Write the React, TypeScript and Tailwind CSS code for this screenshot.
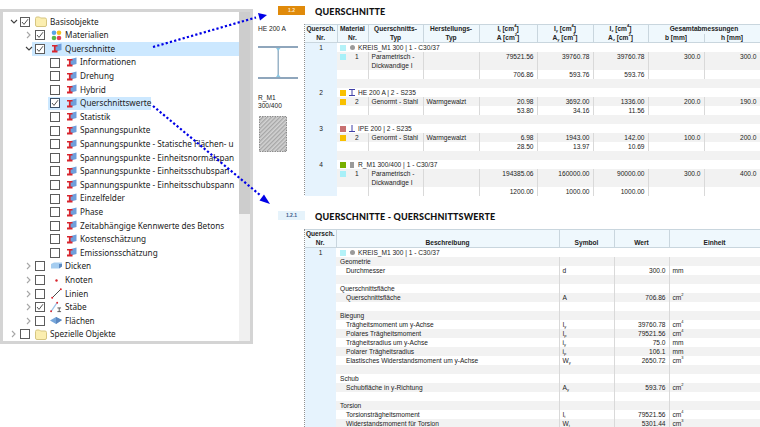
import type { ReactNode } from "react"

type TreeItem = { label: string; level: number; open?: boolean; closed?: boolean; checked?: boolean; icon: string; selected?: "full" | "text" }

const section = { icon: "section" }
const tree: TreeItem[] = [
  { label: "Basisobjekte", level: 0, open: true, checked: true, icon: "folder" },
  { label: "Materialien", level: 1, closed: true, checked: true, icon: "material" },
  { label: "Querschnitte", level: 1, open: true, checked: true, selected: "full", ...section },
  { label: "Informationen", level: 2, ...section },
  { label: "Drehung", level: 2, ...section },
  { label: "Hybrid", level: 2, ...section },
  { label: "Querschnittswerte", level: 2, checked: true, selected: "text", ...section },
  { label: "Statistik", level: 2, ...section },
  { label: "Spannungspunkte", level: 2, ...section },
  { label: "Spannungspunkte - Statische Flächen- u", level: 2, ...section },
  { label: "Spannungspunkte - Einheitsnormalspan", level: 2, ...section },
  { label: "Spannungspunkte - Einheitsschubspan", level: 2, ...section },
  { label: "Spannungspunkte - Einheitsschubspann", level: 2, ...section },
  { label: "Einzelfelder", level: 2, ...section },
  { label: "Phase", level: 2, ...section },
  { label: "Zeitabhängige Kennwerte des Betons", level: 2, ...section },
  { label: "Kostenschätzung", level: 2, ...section },
  { label: "Emissionsschätzung", level: 2, ...section },
  { label: "Dicken", level: 1, closed: true, icon: "thickness" },
  { label: "Knoten", level: 1, closed: true, icon: "node" },
  { label: "Linien", level: 1, closed: true, icon: "line" },
  { label: "Stäbe", level: 1, closed: true, checked: true, icon: "member" },
  { label: "Flächen", level: 1, closed: true, icon: "surface" },
  { label: "Spezielle Objekte", level: 0, closed: true, icon: "folder" },
]

function TreeIcon({ name }: { name: string }) {
  if (name === "folder") {
    return (
      <svg width="12" height="11" viewBox="0 0 12 11">
        <path d="M.5 2.5 Q.5 1 2 1 H4.5 L5.5 2 H10 Q11.5 2 11.5 3.5 V9 Q11.5 10.5 10 10.5 H2 Q.5 10.5 .5 9 Z" fill="#fbeeb0" stroke="#d6c581" />
      </svg>
    )
  }
  if (name === "material") {
    return (
      <svg width="11" height="11" viewBox="0 0 11 11">
        <circle cx="3" cy="2.8" r="2.3" fill="#5aa5e6" />
        <circle cx="8" cy="2.8" r="2.3" fill="#f5c020" />
        <circle cx="3" cy="8" r="2.3" fill="#58b848" />
        <circle cx="8" cy="8" r="2.3" fill="#e0405a" />
      </svg>
    )
  }
  if (name === "section") {
    return (
      <svg width="11" height="11" viewBox="0 0 11 11">
        <path d="M3 2.5 L10.5 .5 V7 L3 9 Z" fill="#6f9fdc" />
        <path d="M1 2 H6.5 V3.4 H4.6 V7.6 H6.5 V9.4 H1 V7.6 H2.9 V3.4 H1 Z" fill="#d8242c" />
      </svg>
    )
  }
  if (name === "thickness") {
    return (
      <svg width="11" height="11" viewBox="0 0 11 11">
        <path d="M0 3 L3 1.5 H11 V5.5 L8 7.5 H0 Z" fill="#a5cdf0" />
        <path d="M8 3 H11 V5.5 L8 7.5 Z" fill="#5c88c0" />
      </svg>
    )
  }
  if (name === "node") {
    return (
      <svg width="11" height="11" viewBox="0 0 11 11">
        <circle cx="5.5" cy="5.5" r="1.2" fill="#d8242c" />
      </svg>
    )
  }
  if (name === "line") {
    return (
      <svg width="11" height="11" viewBox="0 0 11 11">
        <path d="M1 10 L10 1" stroke="#333" strokeWidth="0.9" />
        <circle cx="1.2" cy="9.8" r="1" fill="#d8242c" />
        <circle cx="9.8" cy="1.2" r="1" fill="#d8242c" />
      </svg>
    )
  }
  if (name === "member") {
    return (
      <svg width="13" height="12" viewBox="0 0 13 12">
        <path d="M1 11 L7.5 1.5" stroke="#9cc4e8" strokeWidth="1.3" />
        <circle cx="1.2" cy="10.6" r="1" fill="#d8242c" />
        <circle cx="7.8" cy="1.4" r="1" fill="#d8242c" />
        <path d="M8 7 H12 M10 7 V11 M8 11 H12" stroke="#444" strokeWidth="0.9" fill="none" />
      </svg>
    )
  }
  return (
    <svg width="12" height="11" viewBox="0 0 12 11">
      <path d="M0 5.5 L6 2 L12 5 L6 9 Z" fill="#76a6da" />
      <path d="M6 2 L12 5 L6 9 Z" fill="#5c88c0" />
    </svg>
  )
}

function TreeRow({ item }: { item: TreeItem }) {
  const indent = item.level === 0 ? "pl-[5px]" : item.level === 1 ? "pl-[20px]" : "pl-[35px]"
  return (
    <div className={`relative flex h-[13.6px] items-center whitespace-nowrap ${indent}`}>
      {item.selected === "full" && <div className="absolute inset-y-0 left-[29px] right-0 bg-[#cce8ff]" />}
      {item.selected === "text" && <div className="absolute inset-y-0 left-[45px] w-[103px] bg-[#cce8ff]" />}
      <div className="relative flex w-[12px] shrink-0 items-center justify-center">
        {item.open && (
          <svg width="8" height="6" viewBox="0 0 8 6">
            <path d="M1 1 L4 4 L7 1" fill="none" stroke="#404040" strokeWidth="1.1" />
          </svg>
        )}
        {item.closed && (
          <svg width="6" height="8" viewBox="0 0 6 8">
            <path d="M1 1 L4 4 L1 7" fill="none" stroke="#a6a6a6" strokeWidth="1.1" />
          </svg>
        )}
      </div>
      <div className={`relative flex h-[10px] w-[10px] shrink-0 items-center justify-center border bg-white ${item.selected === "text" ? "border-[#3a4f66]" : "border-[#5c5c5c]"}`}>
        {item.checked && (
          <svg width="8" height="8" viewBox="0 0 8 8">
            <path d="M1 4 L3 6.4 L7 1.2" fill="none" stroke="#404040" strokeWidth="0.9" />
          </svg>
        )}
      </div>
      <div className="relative ml-[5px] flex w-[12px] shrink-0 items-center justify-center">
        <TreeIcon name={item.icon} />
      </div>
      <span className="relative ml-[3px] text-[8.2px] text-[#222]">{item.label}</span>
    </div>
  )
}

function TreePanel() {
  return (
    <div className="mt-[9px] flex h-[335px] w-[253px] shrink-0 border-[3px] border-[#d4d4d4] bg-white font-['Noto_Sans',sans-serif]">
      <div className="w-[236px] overflow-hidden pt-[3px]">
        {tree.map((item, i) => (
          <TreeRow key={i} item={item} />
        ))}
      </div>
      <div className="flex-1 bg-[#f0f0f0]">
        <div className="h-[202px] bg-[#cdcdcd]" />
      </div>
    </div>
  )
}

function Swatch({ color }: { color: string }) {
  return <span className="inline-block h-[6px] w-[6px] shrink-0" style={{ background: color }} />
}

function SectionGlyph({ kind }: { kind: string }) {
  if (kind === "circle") return <span className="inline-block h-[5px] w-[5px] rounded-full bg-[#9a9a9a]" />
  if (kind === "i")
    return (
      <svg width="6" height="7" viewBox="0 0 6 7">
        <path d="M0 .5 H6 M3 .5 V6.5 M0 6.5 H6" stroke="#4040a8" fill="none" />
      </svg>
    )
  if (kind === "t")
    return (
      <svg width="6" height="7" viewBox="0 0 6 7">
        <path d="M3 0 V6 M0 6.5 H6" stroke="#4040a8" fill="none" />
      </svg>
    )
  return <span className="inline-block h-[6px] w-[4px] bg-[#9a9a9a]" />
}

const td = "h-[9px] p-0 leading-[9px] border-r border-[#d9d9d9] whitespace-nowrap overflow-hidden"
const num = `${td} pr-[3px] text-right`

type Row1 =
  | { kind: "title"; nr: string; color: string; glyph: string; text: string }
  | { kind: "blank" }
  | { kind: "data"; color?: string; mat?: string; typ?: string; her?: string; v?: string[] }

const rows1: Row1[] = [
  { kind: "title", nr: "1", color: "#b4f2f8", glyph: "circle", text: "KREIS_M1 300 | 1 - C30/37" },
  { kind: "data", color: "#a8f0f8", mat: "1", typ: "Parametrisch -", v: ["79521.56", "39760.78", "39760.78", "300.0", "300.0"] },
  { kind: "data", typ: "Dickwandige I" },
  { kind: "data", v: ["706.86", "593.76", "593.76", "", ""] },
  { kind: "blank" },
  { kind: "title", nr: "2", color: "#f8c000", glyph: "i", text: "HE 200 A | 2 - S235" },
  { kind: "data", color: "#f8c000", mat: "2", typ: "Genormt - Stahl", her: "Warmgewalzt", v: ["20.98", "3692.00", "1336.00", "200.0", "190.0"] },
  { kind: "data", v: ["53.80", "34.16", "11.56", "", ""] },
  { kind: "blank" },
  { kind: "title", nr: "3", color: "#c87070", glyph: "t", text: "IPE 200 | 2 - S235" },
  { kind: "data", color: "#f8c000", mat: "2", typ: "Genormt - Stahl", her: "Warmgewalzt", v: ["6.98", "1943.00", "142.00", "100.0", "200.0"] },
  { kind: "data", v: ["28.50", "13.97", "10.69", "", ""] },
  { kind: "blank" },
  { kind: "title", nr: "4", color: "#78b000", glyph: "r", text: "R_M1 300/400 | 1 - C30/37" },
  { kind: "data", color: "#a8f0f8", mat: "1", typ: "Parametrisch -", v: ["194385.06", "160000.00", "90000.00", "300.0", "400.0"] },
  { kind: "data", typ: "Dickwandige I" },
  { kind: "data", v: ["1200.00", "1000.00", "1000.00", "", ""] },
]

// stripe pattern follows the report, not the row index: two-line cells share one grey band
const stripes1 = [0, 1, 1, 0, 1, 0, 1, 0, 1, 0, 1, 0, 1, 0, 1, 1, 0]

const th = "h-[8.5px] border-r border-[#c9d6de] p-0 font-bold leading-[8.5px] text-center align-middle"

function Sym({ a, b }: { a: string; b: string }) {
  return (
    <>
      {a}
      <sub className="align-baseline text-[4px] leading-[0]">{b}</sub>
    </>
  )
}

function Pow({ n }: { n: string }) {
  return <sup className="align-[2px] text-[4px] leading-[0]">{n}</sup>
}

function Table1() {
  return (
    <table className="w-[455px] table-fixed border-collapse self-start font-['Liberation_Sans',sans-serif] text-[6.6px] text-[#222]">
      <colgroup>
        <col className="w-[32px]" />
        <col className="w-[31px]" />
        <col className="w-[55px]" />
        <col className="w-[56px]" />
        <col className="w-[58px]" />
        <col className="w-[56px]" />
        <col className="w-[55px]" />
        <col className="w-[56px]" />
        <col className="w-[56px]" />
      </colgroup>
      <thead className="bg-[#eff8fd]">
        <tr className="border-t border-[#c9d6de]">
          <th className={th}>Quersch.</th>
          <th className={th}>Material</th>
          <th className={th}>Querschnitts-</th>
          <th className={th}>Herstellungs-</th>
          <th className={th}><Sym a="I" b="t" /> [cm<Pow n="4" />]</th>
          <th className={th}><Sym a="I" b="y" /> [cm<Pow n="4" />]</th>
          <th className={th}><Sym a="I" b="z" /> [cm<Pow n="4" />]</th>
          <th className={th} colSpan={2}>Gesamtabmessungen</th>
        </tr>
        <tr className="border-b border-[#c9d6de]">
          <th className={th}>Nr.</th>
          <th className={th}>Nr.</th>
          <th className={th}>Typ</th>
          <th className={th}>Typ</th>
          <th className={th}>A [cm<Pow n="2" />]</th>
          <th className={th}><Sym a="A" b="y" /> [cm<Pow n="2" />]</th>
          <th className={th}><Sym a="A" b="z" /> [cm<Pow n="2" />]</th>
          <th className={th}>b [mm]</th>
          <th className={th}>h [mm]</th>
        </tr>
      </thead>
      <tbody>
        {rows1.map((row, i) => {
          const bg = stripes1[i] ? "bg-[#f2f2f2]" : "bg-white"
          if (row.kind === "title") {
            return (
              <tr key={i} className={bg}>
                <td className="h-[9px] bg-[#e6f3fd] p-0 text-center leading-[9px]">{row.nr}</td>
                <td colSpan={8} className="h-[9px] p-0 leading-[9px]">
                  <div className="flex h-[9px] items-center pl-[3px]">
                    <Swatch color={row.color} />
                    <span className="flex w-[12px] justify-center"><SectionGlyph kind={row.glyph} /></span>
                    <span>{row.text}</span>
                  </div>
                </td>
              </tr>
            )
          }
          if (row.kind === "blank") {
            return (
              <tr key={i} className={bg}>
                <td className="h-[9px] bg-[#e6f3fd] p-0" />
                <td colSpan={8} className="h-[9px] p-0" />
              </tr>
            )
          }
          return (
            <tr key={i} className={bg}>
              <td className="h-[9px] bg-[#e6f3fd] p-0" />
              <td className={td}>
                <div className="flex h-[9px] items-center pl-[3px]">
                  {row.color && <Swatch color={row.color} />}
                  <span className="ml-[9px]">{row.mat}</span>
                </div>
              </td>
              <td className={`${td} pl-[3px]`}>{row.typ}</td>
              <td className={`${td} pl-[3px]`}>{row.her}</td>
              {[0, 1, 2, 3, 4].map((n) => (
                <td key={n} className={num}>{row.v?.[n]}</td>
              ))}
            </tr>
          )
        })}
      </tbody>
    </table>
  )
}

type Row2 = { text?: string; indent?: boolean; title?: boolean; nr?: string; sym?: ReactNode; val?: string; unit?: ReactNode }

const cm = (n: string) => (
  <>
    cm<Pow n={n} />
  </>
)

const rows2: Row2[] = [
  { title: true, nr: "1", text: "KREIS_M1 300 | 1 - C30/37" },
  { text: "Geometrie" },
  { text: "Durchmesser", indent: true, sym: "d", val: "300.0", unit: "mm" },
  {},
  { text: "Querschnittsfläche" },
  { text: "Querschnittsfläche", indent: true, sym: "A", val: "706.86", unit: cm("2") },
  {},
  { text: "Biegung" },
  { text: "Trägheitsmoment um y-Achse", indent: true, sym: <Sym a="I" b="y" />, val: "39760.78", unit: cm("4") },
  { text: "Polares Trägheitsmoment", indent: true, sym: <Sym a="I" b="p" />, val: "79521.56", unit: cm("4") },
  { text: "Trägheitsradius um y-Achse", indent: true, sym: <Sym a="i" b="y" />, val: "75.0", unit: "mm" },
  { text: "Polarer Trägheitsradius", indent: true, sym: <Sym a="i" b="p" />, val: "106.1", unit: "mm" },
  { text: "Elastisches Widerstandsmoment um y-Achse", indent: true, sym: <Sym a="W" b="y" />, val: "2650.72", unit: cm("3") },
  {},
  { text: "Schub" },
  { text: "Schubfläche in y-Richtung", indent: true, sym: <Sym a="A" b="y" />, val: "593.76", unit: cm("2") },
  {},
  { text: "Torsion" },
  { text: "Torsionsträgheitsmoment", indent: true, sym: <Sym a="I" b="t" />, val: "79521.56", unit: cm("4") },
  { text: "Widerstandsmoment für Torsion", indent: true, sym: <Sym a="W" b="t" />, val: "5301.44", unit: cm("3") },
]

function Table2() {
  return (
    <table className="w-[455px] table-fixed border-collapse self-start font-['Liberation_Sans',sans-serif] text-[6.6px] text-[#222]">
      <colgroup>
        <col className="w-[31px]" />
        <col className="w-[223px]" />
        <col className="w-[55px]" />
        <col className="w-[55px]" />
        <col className="w-[91px]" />
      </colgroup>
      <thead className="bg-[#eff8fd]">
        <tr className="border-t border-[#c9d6de]">
          <th className={th}>Quersch.</th>
          <th className={th} />
          <th className={th} />
          <th className={th} />
          <th className={th} />
        </tr>
        <tr className="border-b border-[#c9d6de]">
          <th className={th}>Nr.</th>
          <th className={th}>Beschreibung</th>
          <th className={th}>Symbol</th>
          <th className={th}>Wert</th>
          <th className={th}>Einheit</th>
        </tr>
      </thead>
      <tbody>
        {rows2.map((row, i) => {
          const bg = i % 2 ? "bg-[#f2f2f2]" : "bg-white"
          if (row.title) {
            return (
              <tr key={i} className={bg}>
                <td className="h-[9px] bg-[#e6f3fd] p-0 text-center leading-[9px]">{row.nr}</td>
                <td colSpan={4} className="h-[9px] p-0 leading-[9px]">
                  <div className="flex h-[9px] items-center pl-[4px]">
                    <Swatch color="#b4f2f8" />
                    <span className="flex w-[12px] justify-center"><SectionGlyph kind="circle" /></span>
                    <span>{row.text}</span>
                  </div>
                </td>
              </tr>
            )
          }
          return (
            <tr key={i} className={bg}>
              <td className="h-[9px] bg-[#e6f3fd] p-0" />
              <td className={`${td} ${row.indent ? "pl-[10px]" : "pl-[4px]"}`}>{row.text}</td>
              <td className={`${td} pl-[3px]`}>{row.sym}</td>
              <td className={num}>{row.val}</td>
              <td className={`${td} pl-[3px]`}>{row.unit}</td>
            </tr>
          )
        })}
      </tbody>
    </table>
  )
}

function Heading({ text }: { text: string }) {
  return <h2 className="ml-[10px] font-['Lato',sans-serif] text-[9px] font-black tracking-[0.15px] text-[#111]">{text}</h2>
}

function Thumbs() {
  return (
    <div className="w-[52px] shrink-0 border-r border-dotted border-[#909090] pl-[5px] pt-[1px] font-['Liberation_Sans',sans-serif] text-[6.6px] leading-[8px] text-[#222]">
      <div>HE 200 A</div>
      <svg className="mt-[12px] block" width="40" height="36" viewBox="0 0 40 36">
        <rect x="0" y="1" width="40" height="2" fill="#8fa6bc" />
        <rect x="0" y="32" width="40" height="2" fill="#8fa6bc" />
        <rect x="19.5" y="3" width="1.5" height="29" fill="#9ab4c8" />
        <path d="M18 3 L20.2 6 L22.5 3 Z M18 32 L20.2 29 L22.5 32 Z" fill="#8cc8e4" />
      </svg>
      <div className="mt-[13px]">R_M1</div>
      <div>300/400</div>
      <svg className="mt-[6px] ml-[1px] block" width="28" height="36" viewBox="0 0 28 36">
        <defs>
          <pattern id="hatch" width="3" height="3" patternUnits="userSpaceOnUse" patternTransform="rotate(-45)">
            <rect width="3" height="3" fill="#d2d2d2" />
            <rect width="3" height="1.3" fill="#a6a6a6" />
          </pattern>
        </defs>
        <rect x="0.5" y="0.5" width="27" height="35" fill="url(#hatch)" stroke="#8c8c8c" strokeDasharray="1.5 1" />
      </svg>
    </div>
  )
}

function Arrows() {
  return (
    <svg className="pointer-events-none absolute inset-0" width="760" height="427" viewBox="0 0 760 427">
      <path d="M153 47 L256 17.5" stroke="#0000e6" strokeWidth="2.2" strokeDasharray="2.2 2.2" fill="none" />
      <path d="M258 13 L267 15 L260 20.5 Z" fill="#0000e6" />
      <path d="M153 106 L260 195" stroke="#0000e6" strokeWidth="2.2" strokeDasharray="2.2 2.2" fill="none" />
      <path d="M264 194.5 L270 204 L259.5 200.5 Z" fill="#0000e6" />
    </svg>
  )
}

export default function App() {
  return (
    <div className="relative flex h-[427px] w-[760px] overflow-hidden bg-white">
      <TreePanel />
      <main className="w-[507px] shrink-0">
        <div className="flex h-[24px] items-start pt-[6px]">
          <div className="ml-[25px] flex h-[9px] w-[27px] shrink-0 items-center justify-center bg-[#e08a0a] font-['Liberation_Sans',sans-serif] text-[5px] font-bold text-[#fbe6c8]">1.2</div>
          <div className="-mt-[1px]"><Heading text="QUERSCHNITTE" /></div>
        </div>
        <div className="flex h-[171px]">
          <Thumbs />
          <Table1 />
        </div>
        <div className="flex h-[34px] items-start pt-[16px]">
          <div className="ml-[25px] flex h-[9px] w-[27px] shrink-0 items-center justify-center bg-[#e6f3fb] font-['Liberation_Sans',sans-serif] text-[5px] font-bold text-[#3a5a8a]">1.2.1</div>
          <div className="-mt-[1px]"><Heading text="QUERSCHNITTE - QUERSCHNITTSWERTE" /></div>
        </div>
        <div className="flex h-[198px]">
          <div className="w-[52px] shrink-0 border-r border-dotted border-[#909090]" />
          <Table2 />
        </div>
      </main>
      <Arrows />
    </div>
  )
}
